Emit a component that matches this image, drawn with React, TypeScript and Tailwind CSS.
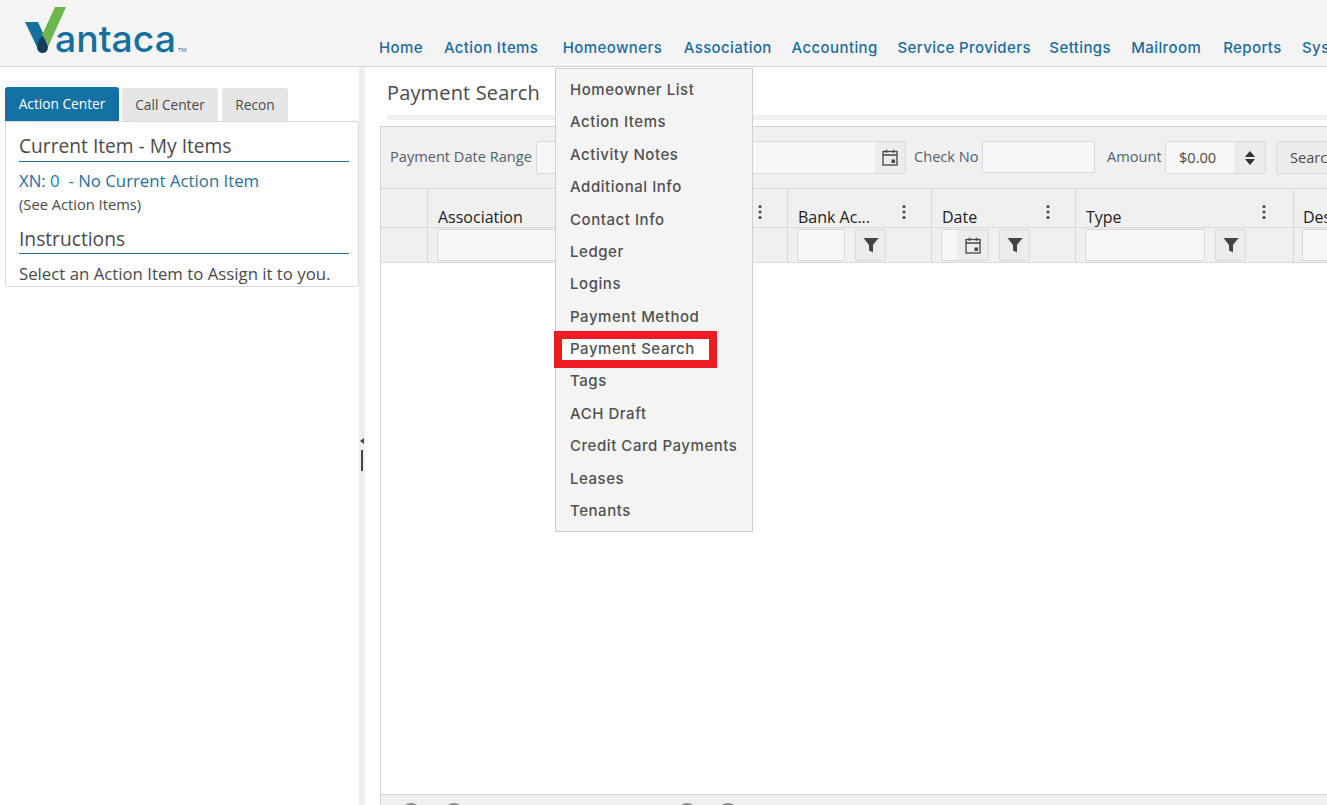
import React from "react";

const NAV = [
  ["Home", "w-[44px]"],
  ["Action Items", "w-[98px]"],
  ["Homeowners", "w-[100px]"],
  ["Association", "w-[87px]"],
  ["Accounting", "w-[85px]"],
  ["Service Providers", "w-[131px]"],
  ["Settings", "w-[61px]"],
  ["Mailroom", "w-[71px]"],
  ["Reports", "w-[58px]"],
  ["System", "w-[60px]"],
];
const MENU = ["Homeowner List", "Action Items", "Activity Notes", "Additional Info", "Contact Info", "Ledger", "Logins", "Payment Method", "Payment Search", "Tags", "ACH Draft", "Credit Card Payments", "Leases", "Tenants"];

function Logo() {
  return (
    <svg width="170" height="56" viewBox="0 0 170 56" className="ml-[24px] mt-[6px] shrink-0">
      <path d="M1 16 H14 L23 36 L18 29 L13 41 Z" fill="#15709f" />
      <path d="M31 1 H42 L24 41 L23 36 L18 29 Z" fill="#6cb64b" />
      <path d="M18 29 C15 34 13 37 13 41 C13 45 16 47 19 47 C22 47 24 44 24 41 C24 38 21 33 18 29 Z" fill="#123f5c" />
      <text x="31" y="46" fontFamily="Inter, sans-serif" fontWeight="500" fontSize="37" fill="#15709f" textLength="121" lengthAdjust="spacingAndGlyphs">antaca</text>
      <text x="154" y="46" fontFamily="Open Sans, sans-serif" fontSize="6" fill="#15709f">TM</text>
    </svg>
  );
}

function Calendar({ className = "" }: { className?: string }) {
  return (
    <svg width="16" height="17" viewBox="0 0 16 17" className={className} fill="none">
      <rect x="1" y="2.5" width="14" height="13.5" stroke="#444" strokeWidth="1.3" />
      <path d="M1 6h14" stroke="#444" strokeWidth="1.5" />
      <path d="M4.5 0.8v3M11.5 0.8v3" stroke="#444" strokeWidth="1.5" />
      <rect x="9.5" y="10.5" width="3.5" height="3.5" fill="#444" />
    </svg>
  );
}

function Funnel() {
  return (
    <svg width="16" height="16" viewBox="0 0 16 16">
      <path d="M0.5 1H15.5L10 8V15.5L6 13.5V8Z" fill="#444" />
    </svg>
  );
}

function Dots() {
  return (
    <svg width="4" height="16" viewBox="0 0 4 16" className="shrink-0">
      <circle cx="2" cy="2.5" r="1.5" fill="#444" />
      <circle cx="2" cy="8" r="1.5" fill="#444" />
      <circle cx="2" cy="13.5" r="1.5" fill="#444" />
    </svg>
  );
}

function FilterBtn() {
  return (
    <div className="w-[31px] h-[32px] shrink-0 flex items-center justify-center rounded-[2px] border border-[#d9d9d9] bg-[#ececec]">
      <Funnel />
    </div>
  );
}

function HeaderCell({ w, label, dots = true, pr = "pr-[25px]", pl = "pl-[10px]" }: { w: string; label?: string; dots?: boolean; pr?: string; pl?: string }) {
  return (
    <div className={`${w} ${pr} ${pl} shrink-0 h-full border-r border-[#d9d9d9] flex items-start relative`}>
      {label && <span className="mt-[17px] text-[16px] font-medium leading-[22px] text-[#222] whitespace-nowrap">{label}</span>}
      {dots && <div className="mt-[15px] ml-auto"><Dots /></div>}
    </div>
  );
}

function Input({ w }: { w: string }) {
  return <div className={`${w} h-[32px] shrink-0 rounded-[2px] border border-[#d9d9d9] bg-[#f7f7f7]`} />;
}

export default function App() {
  return (
    <div className="relative w-[1327px] h-[805px] overflow-hidden bg-white font-['Open_Sans',sans-serif] text-[#4a4a4a]">
      <header className="h-[67px] bg-[#f4f4f4] border-b border-[#d4d4d4] flex overflow-hidden">
        <div className="w-[355px] shrink-0"><Logo /></div>
        <nav className="ml-[24px] flex gap-[20.9px] pt-[38px] font-['Inter',sans-serif] font-medium text-[15px] leading-[20px] tracking-[0.4px] text-[#1b6d9b]">
          {NAV.map(([n, w]) => (
            <span key={n} className={`${w} whitespace-nowrap shrink-0`}>{n}</span>
          ))}
        </nav>
      </header>

      <div className="flex h-[738px]">
        <aside className="w-[359px] shrink-0 pl-[5px] pt-[20px] bg-white">
          <div className="flex items-end h-[34px] text-[13.7px] leading-[20px]">
            <div className="w-[114px] h-[34px] rounded-t-[3px] bg-[#1272a4] text-white flex items-center justify-center">Action Center</div>
            <div className="ml-[3px] w-[96px] h-[33px] rounded-t-[3px] bg-[#e6e6e6] flex items-center justify-center">Call Center</div>
            <div className="ml-[4px] w-[66px] h-[33px] rounded-t-[3px] bg-[#e6e6e6] flex items-center justify-center">Recon</div>
          </div>
          <div className="w-[354px] h-[166px] border border-[#d9d9d9] rounded-b-[2px] pl-[13px] pr-[9px] overflow-hidden">
            <div className="mt-[10px] h-[30px] border-b border-[#1b6d8f] text-[19.2px] leading-[28px]">Current Item - My Items</div>
            <div className="mt-[8px] text-[16.8px] leading-[22px] text-[#2a6f94] whitespace-pre">XN: <span className="text-[#1b7fb5]">0</span>  - No Current Action Item</div>
            <div className="mt-[2px] text-[14.7px] leading-[20px]">(See Action Items)</div>
            <div className="mt-[11px] h-[29px] border-b border-[#1b6d8f] text-[19.2px] leading-[28px]">Instructions</div>
            <div className="mt-[9px] text-[16.8px] leading-[22px]">Select an Action Item to Assign it to you.</div>
          </div>
        </aside>

        <div className="w-[6px] shrink-0 bg-[#eeeeee] flex flex-col items-center">
          <div className="mt-[371px] w-0 h-0 border-y-[3px] border-y-transparent border-r-[4px] border-r-[#444]" />
          <div className="mt-[6px] w-[2px] h-[21px] bg-[#444]" />
        </div>

        <main className="flex-1 min-w-0 flex flex-col overflow-hidden">
          <h1 className="ml-[22px] mt-[12px] h-[28px] text-[20px] leading-[28px] font-normal tracking-[0.15px]">Payment Search</h1>
          <div className="ml-[22px] mt-[8px] h-[5px] bg-[#f0f0f0]" />
          <section className="ml-[15px] mt-[6px] flex-1 border-l border-t border-[#d4d4d4] flex flex-col min-h-0">
            <div className="h-[62px] shrink-0 bg-[#f0f0f0] border-b border-[#d9d9d9] flex items-center pl-[9px] text-[14.6px] whitespace-nowrap">
              <span className="w-[146px] shrink-0 -mt-[2px] text-[#4f6372]">Payment Date Range</span>
              <div className="w-[370px] h-[33px] shrink-0 border border-[#d9d9d9] rounded-[2px] bg-[#f7f7f7] flex justify-end">
                <div className="w-[30px] h-full bg-[#ececec] flex items-center justify-center"><Calendar /></div>
              </div>
              <span className="ml-[8px] w-[68px] shrink-0 -mt-[2px] text-[#4f6372]">Check No</span>
              <div className="w-[113px] h-[32px] shrink-0 -mt-[2px] border border-[#d9d9d9] rounded-[2px] bg-[#f7f7f7]" />
              <span className="ml-[12px] w-[58px] shrink-0 -mt-[2px] text-[#4f6372]">Amount</span>
              <div className="w-[101px] h-[33px] shrink-0 border border-[#d9d9d9] rounded-[2px] bg-[#f7f7f7] flex items-center">
                <span className="flex-1 pl-[13px]">$0.00</span>
                <div className="w-[31px] h-full bg-[#ececec] flex flex-col items-center justify-center gap-[2px]">
                  <div className="w-0 h-0 border-x-[5px] border-x-transparent border-b-[6px] border-b-[#333]" />
                  <div className="w-0 h-0 border-x-[5px] border-x-transparent border-t-[6px] border-t-[#333]" />
                </div>
              </div>
              <div className="ml-[10px] w-[70px] h-[33px] shrink-0 border border-[#d9d9d9] rounded-[2px] bg-[#ececec] pl-[13px] leading-[31px]">Search</div>
            </div>

            <div className="h-[39px] shrink-0 bg-[#f0f0f0] border-b border-[#d9d9d9] flex">
              <HeaderCell w="w-[47px]" dots={false} />
              <HeaderCell w="w-[213px]" label="Association" dots={false} />
              <HeaderCell w="w-[147px]" />
              <HeaderCell w="w-[144px]" label="Bank Ac..." />
              <HeaderCell w="w-[144px]" label="Date" />
              <HeaderCell w="w-[218px]" label="Type" pr="pr-[27px]" />
              <HeaderCell w="w-[100px]" label="Description" dots={false} pl="pl-[9px]" />
            </div>

            <div className="h-[35px] shrink-0 bg-[#f0f0f0] border-b border-[#d9d9d9] flex items-center">
              <div className="w-[47px] h-full shrink-0 border-r border-[#d9d9d9]" />
              <div className="w-[360px] h-full shrink-0 border-r border-[#d9d9d9] pl-[9px] flex items-center"><Input w="w-[300px]" /></div>
              <div className="w-[144px] h-full shrink-0 border-r border-[#d9d9d9] pl-[9px] flex items-center gap-[10px]"><Input w="w-[48px]" /><FilterBtn /></div>
              <div className="w-[144px] h-full shrink-0 border-r border-[#d9d9d9] pl-[9px] flex items-center gap-[10px]">
                <div className="w-[48px] h-[32px] shrink-0 rounded-[2px] border border-[#d9d9d9] bg-[#f7f7f7] flex justify-end">
                  <div className="w-[31px] h-full bg-[#ececec] flex items-center justify-center"><Calendar /></div>
                </div>
                <FilterBtn />
              </div>
              <div className="w-[218px] h-full shrink-0 border-r border-[#d9d9d9] pl-[9px] flex items-center gap-[10px]"><Input w="w-[120px]" /><FilterBtn /></div>
              <div className="pl-[8px]"><Input w="w-[100px]" /></div>
            </div>

            <div className="flex-1 bg-white" />

            <div className="h-[11px] shrink-0 bg-[#f0f0f0] border-t border-[#d4d4d4] overflow-hidden flex pl-[20px]">
              <div className="mt-[8px] w-[20px] h-[20px] rounded-full bg-[#8a8a8a]" />
              <div className="mt-[8px] ml-[23px] w-[20px] h-[20px] rounded-full bg-[#8a8a8a]" />
              <div className="mt-[8px] ml-[213px] w-[20px] h-[20px] rounded-full bg-[#8a8a8a]" />
              <div className="mt-[8px] ml-[21px] w-[20px] h-[20px] rounded-full bg-[#8a8a8a]" />
            </div>
          </section>
        </main>
      </div>

      <div className="absolute left-[555px] top-[68px] w-[198px] h-[464px] bg-[#f4f4f4] border border-[#cfcfcf] pt-[5px] font-['Inter',sans-serif] font-medium text-[15px] text-[#505050]">
        {MENU.map((m) => (
          <div key={m} className="relative h-[32.4px] flex items-center pl-[14px] whitespace-nowrap tracking-[0.55px]">
            {m === "Payment Search" && (
              <div className="absolute -left-[2px] -top-[2px] w-[163px] h-[37px] border-[8px] border-[#ed1c24] bg-white" />
            )}
            <span className="relative">{m}</span>
          </div>
        ))}
      </div>
    </div>
  );
}
